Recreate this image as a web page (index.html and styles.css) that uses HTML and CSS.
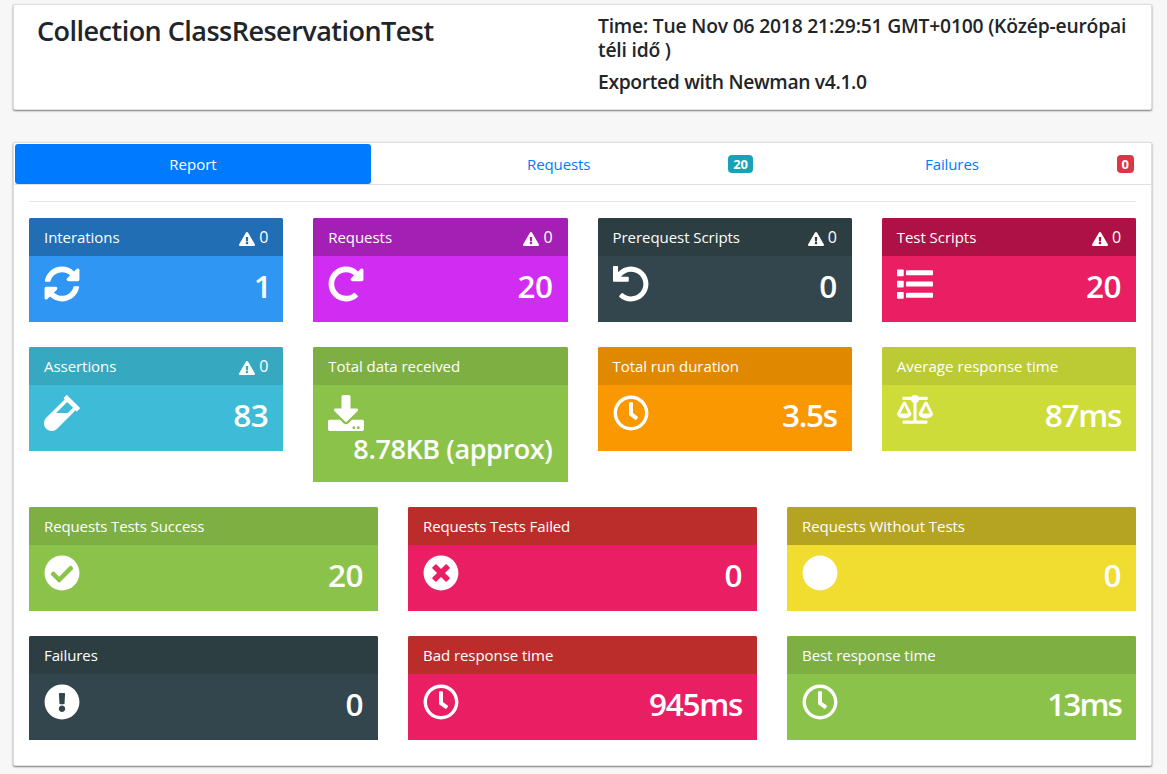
FILE: index.html
```
<!DOCTYPE html>
<html lang="en">
<head>
<meta charset="utf-8">
<title>Newman Report</title>
<link rel="stylesheet" href="styles.css">
</head>
<body>
<svg class="sprite" aria-hidden="true">
  <symbol id="i-warn" viewBox="0 0 576 512"><path d="M569.517 440.013C587.975 472.007 564.806 512 527.94 512H48.054c-36.937 0-59.999-40.055-41.577-71.987L246.423 23.985c18.467-32.009 64.72-31.951 83.154 0l239.94 416.028zM288 354c-25.405 0-46 20.595-46 46s20.595 46 46 46 46-20.595 46-46-20.595-46-46-46zm-43.673-165.346l7.418 136c.347 6.364 5.609 11.346 11.982 11.346h48.546c6.373 0 11.635-4.982 11.982-11.346l7.418-136c.375-6.874-5.098-12.654-11.982-12.654h-63.383c-6.884 0-12.356 5.78-11.981 12.654z"/></symbol>
  <symbol id="i-sync" viewBox="0 0 512 512"><path d="M370.72 133.28C339.458 104.008 298.888 87.962 255.848 88c-77.458.068-144.328 53.178-162.791 126.85-1.344 5.363-6.122 9.15-11.651 9.15H24.103c-7.498 0-13.194-6.807-11.807-14.176C33.933 94.924 134.813 8 256 8c66.448 0 126.791 26.136 171.315 68.685L463.03 40.97C478.149 25.851 504 36.559 504 57.941V192c0 13.255-10.745 24-24 24H345.941c-21.382 0-32.09-25.851-16.971-40.971l41.75-41.749zM32 296h134.059c21.382 0 32.09 25.851 16.971 40.971l-41.75 41.75c31.262 29.273 71.835 45.319 114.876 45.28 77.418-.07 144.315-53.144 162.787-126.849 1.344-5.363 6.122-9.15 11.651-9.15h57.304c7.498 0 13.194 6.807 11.807 14.176C478.067 417.076 377.187 504 256 504c-66.448 0-126.791-26.136-171.315-68.685L48.97 471.03C33.851 486.149 8 475.441 8 454.059V320c0-13.255 10.745-24 24-24z"/></symbol>
  <symbol id="i-redo" viewBox="0 0 512 512"><path d="M256.455 8c66.269.119 126.437 26.233 170.859 68.685l35.715-35.715C478.149 25.851 504 36.559 504 57.941V192c0 13.255-10.745 24-24 24H345.941c-21.382 0-32.09-25.851-16.971-40.971l41.75-41.75c-30.864-28.899-70.801-44.907-113.23-45.273-92.398-.798-170.283 73.977-169.484 169.442C88.764 348.009 162.184 424 256 424c41.127 0 79.997-14.678 110.629-41.556 4.743-4.161 11.906-3.908 16.368.553l39.662 39.662c4.872 4.872 4.631 12.815-.482 17.433C378.202 479.813 319.926 504 256 504 119.034 504 8.001 392.967 8 256.002 7.999 119.193 119.646 7.755 256.455 8z"/></symbol>
  <symbol id="i-undo" viewBox="0 0 512 512"><path d="M212.333 224.333H12c-6.627 0-12-5.373-12-12V12C0 5.373 5.373 0 12 0h48c6.627 0 12 5.373 12 12v78.112C117.773 39.279 184.26 7.47 258.175 8.007c136.906.994 246.448 111.623 246.157 248.532C504.041 393.258 393.12 504 256.333 504c-64.089 0-122.496-24.313-166.51-64.215-5.099-4.622-5.334-12.554-.467-17.42l33.967-33.967c4.474-4.474 11.662-4.717 16.401-.525C170.76 415.336 211.58 432 256.333 432c97.268 0 176-78.716 176-176 0-97.267-78.716-176-176-176-58.496 0-110.28 28.476-142.274 72.333h98.274c6.627 0 12 5.373 12 12v48c0 6.627-5.373 12-12 12z"/></symbol>
  <symbol id="i-list" viewBox="0 0 512 512"><rect x="0" y="48" width="96" height="96" rx="12"/><rect x="0" y="208" width="96" height="96" rx="12"/><rect x="0" y="368" width="96" height="96" rx="12"/><rect x="128" y="60" width="384" height="72" rx="12"/><rect x="128" y="220" width="384" height="72" rx="12"/><rect x="128" y="380" width="384" height="72" rx="12"/></symbol>
  <symbol id="i-vial" viewBox="0 16 480 480"><path d="M477.7 186.1L309.5 18.3c-3.1-3.1-8.2-3.1-11.3 0l-34 33.9c-3.1 3.1-3.1 8.2 0 11.3l11.2 11.1L33 316.5c-38.8 38.7-45.1 102-9.4 143.5 20.6 24 49.5 36 78.4 35.9 26.4 0 52.8-10 72.9-30.1l246.3-245.7 11.2 11.1c3.1 3.1 8.2 3.1 11.3 0l34-33.9c3.1-3 3.1-8.1 0-11.2zM318 256H161l148-147.7 78.5 78.3L318 256z"/></symbol>
  <symbol id="i-download" viewBox="0 0 512 512"><path d="M216 0h80c13.3 0 24 10.7 24 24v168h87.7c17.8 0 26.7 21.5 14.1 34.1L269.7 378.3c-7.5 7.5-19.8 7.5-27.3 0L90.1 226.1c-12.6-12.6-3.7-34.1 14.1-34.1H192V24c0-13.3 10.7-24 24-24zm296 376v112c0 13.3-10.7 24-24 24H24c-13.3 0-24-10.7-24-24V376c0-13.3 10.7-24 24-24h146.7l49 49c20.1 20.1 52.5 20.1 72.6 0l49-49H488c13.3 0 24 10.7 24 24zm-124 88c0-11-9-20-20-20s-20 9-20 20 9 20 20 20 20-9 20-20zm64 0c0-11-9-20-20-20s-20 9-20 20 9 20 20 20 20-9 20-20z"/></symbol>
  <symbol id="i-clock" viewBox="0 0 512 512"><path d="M256 8C119 8 8 119 8 256s111 248 248 248 248-111 248-248S393 8 256 8zm0 448c-110.5 0-200-89.5-200-200S145.5 56 256 56s200 89.5 200 200-89.5 200-200 200zm61.8-104.4l-84.9-61.7c-3.1-2.3-4.9-5.9-4.9-9.7V116c0-6.6 5.4-12 12-12h32c6.6 0 12 5.4 12 12v141.7l66.8 48.6c5.4 3.9 6.5 11.4 2.6 16.8L334.6 349c-3.9 5.3-11.4 6.5-16.8 2.6z"/></symbol>
  <symbol id="i-scale" viewBox="0 0 512 512"><g><rect x="76" y="24" width="360" height="46" rx="10"/><circle cx="256" cy="58" r="58"/><rect x="234" y="80" width="44" height="310"/><rect x="80" y="362" width="352" height="48" rx="12"/><path fill-rule="evenodd" d="M82 106c14-18 34-18 46 0l70 142c6 12 8 20 6 28-8 32-48 54-99 54S8 308 1 276c-2-8 0-16 6-28zM105 150L50 264H160z"/><path fill-rule="evenodd" d="M389 106c14-18 34-18 46 0l70 142c6 12 8 20 6 28-8 32-48 54-99 54s-97-22-104-54c-2-8 0-16 6-28zM412 150L357 264H467z"/></g></symbol>
  <symbol id="i-check" viewBox="0 0 512 512"><path d="M504 256c0 136.967-111.033 248-248 248S8 392.967 8 256 119.033 8 256 8s248 111.033 248 248zM227.314 387.314l184-184c6.248-6.248 6.248-16.379 0-22.627l-22.627-22.627c-6.248-6.249-16.379-6.249-22.628 0L216 308.118l-70.059-70.059c-6.248-6.248-16.379-6.248-22.628 0l-22.627 22.627c-6.248 6.248-6.248 16.379 0 22.627l104 104c6.249 6.249 16.379 6.249 22.628.001z"/></symbol>
  <symbol id="i-times" viewBox="0 0 512 512"><path d="M256 8C119 8 8 119 8 256s111 248 248 248 248-111 248-248S393 8 256 8zm121.6 313.1c4.7 4.7 4.7 12.3 0 17L338 377.6c-4.7 4.7-12.3 4.7-17 0L256 312l-65.1 65.6c-4.7 4.7-12.3 4.7-17 0L134.4 338c-4.7-4.7-4.7-12.3 0-17l65.6-65-65.6-65.1c-4.7-4.7-4.7-12.3 0-17l39.6-39.6c4.7-4.7 12.3-4.7 17 0l65 65.7 65.1-65.6c4.7-4.7 12.3-4.7 17 0l39.6 39.6c4.7 4.7 4.7 12.3 0 17L312 256l65.6 65.1z"/></symbol>
  <symbol id="i-circle" viewBox="0 0 512 512"><circle cx="256" cy="256" r="248"/></symbol>
  <symbol id="i-excl" viewBox="0 0 512 512"><path d="M504 256c0 136.997-111.043 248-248 248S8 392.997 8 256C8 119.083 119.043 8 256 8s248 111.083 248 248zm-248 50c-25.405 0-46 20.595-46 46s20.595 46 46 46 46-20.595 46-46-20.595-46-46-46zm-43.673-165.346l7.418 136c.347 6.364 5.609 11.346 11.982 11.346h48.546c6.373 0 11.635-4.982 11.982-11.346l7.418-136c.375-6.874-5.098-12.654-11.982-12.654h-63.383c-6.884 0-12.356 5.78-11.981 12.654z"/></symbol>
</svg>

<header class="panel banner">
  <h1 class="banner-title">Collection ClassReservationTest</h1>
  <div class="banner-meta">
    <p class="meta-time">Time: Tue Nov 06 2018 21:29:51 GMT+0100 (Közép-európai<br>téli idő )</p>
    <p class="meta-export">Exported with Newman v4.1.0</p>
  </div>
</header>

<main class="panel">
  <nav class="tabs">
    <a class="tab tab-active">Report</a>
    <a class="tab tab-requests"><span class="tab-label">Requests</span><span class="badge badge-info">20</span></a>
    <a class="tab tab-failures"><span class="tab-label">Failures</span><span class="badge badge-danger">0</span></a>
  </nav>
  <div class="content">
    <section class="grid four">
      <article class="card blue"><div class="head"><span>Interations</span><span class="alert"><svg><use href="#i-warn"/></svg>0</span></div><div class="body"><svg class="icon"><use href="#i-sync"/></svg><b class="value one">1</b></div></article>
      <article class="card purple"><div class="head"><span>Requests</span><span class="alert"><svg><use href="#i-warn"/></svg>0</span></div><div class="body"><svg class="icon"><use href="#i-redo"/></svg><b class="value">20</b></div></article>
      <article class="card dark"><div class="head"><span>Prerequest Scripts</span><span class="alert"><svg><use href="#i-warn"/></svg>0</span></div><div class="body"><svg class="icon"><use href="#i-undo"/></svg><b class="value">0</b></div></article>
      <article class="card pink"><div class="head"><span>Test Scripts</span><span class="alert"><svg><use href="#i-warn"/></svg>0</span></div><div class="body"><svg class="icon"><use href="#i-list"/></svg><b class="value">20</b></div></article>
      <article class="card cyan"><div class="head"><span>Assertions</span><span class="alert"><svg><use href="#i-warn"/></svg>0</span></div><div class="body"><svg class="icon"><use href="#i-vial"/></svg><b class="value">83</b></div></article>
      <article class="card green"><div class="head"><span>Total data received</span></div><div class="body stacked"><svg class="icon"><use href="#i-download"/></svg><b class="value small">8.78KB (approx)</b></div></article>
      <article class="card orange"><div class="head"><span>Total run duration</span></div><div class="body"><svg class="icon"><use href="#i-clock"/></svg><b class="value tight">3.5s</b></div></article>
      <article class="card lime"><div class="head"><span class="loose">Average response time</span></div><div class="body"><svg class="icon"><use href="#i-scale"/></svg><b class="value tight">87ms</b></div></article>
    </section>
    <section class="grid three">
      <article class="card green"><div class="head"><span class="snug">Requests Tests Success</span></div><div class="body"><svg class="icon"><use href="#i-check"/></svg><b class="value">20</b></div></article>
      <article class="card red"><div class="head"><span class="snug">Requests Tests Failed</span></div><div class="body"><svg class="icon"><use href="#i-times"/></svg><b class="value">0</b></div></article>
      <article class="card yellow"><div class="head"><span>Requests Without Tests</span></div><div class="body"><svg class="icon"><use href="#i-circle"/></svg><b class="value">0</b></div></article>
      <article class="card dark"><div class="head"><span class="snug">Failures</span></div><div class="body"><svg class="icon"><use href="#i-excl"/></svg><b class="value">0</b></div></article>
      <article class="card red"><div class="head"><span>Bad response time</span></div><div class="body"><svg class="icon"><use href="#i-clock"/></svg><b class="value tight">945ms</b></div></article>
      <article class="card green"><div class="head"><span>Best response time</span></div><div class="body"><svg class="icon"><use href="#i-clock"/></svg><b class="value tighter">13ms</b></div></article>
    </section>
  </div>
</main>
</body>
</html>
```

FILE: styles.css
```
* { box-sizing: border-box; }
body {
  margin: 0;
  padding: 4px 15px 0 13px;
  height: 774px;
  overflow: hidden;
  background: #f7f7f7;
  color: #212529;
  font: 15px/24px "Open Sans", "Noto Sans", sans-serif;
}
.sprite { display: none; }
.panel {
  background: #fff;
  border: 1px solid #dfdfdf;
  border-radius: 2px;
  box-shadow: 0 1px 2px rgba(0, 0, 0, .5);
}

/* banner */
.banner {
  display: grid;
  grid-template-columns: 561px 1fr;
  height: 106px;
  padding: 9px 0 0 23px;
  margin-bottom: 32px;
}
.banner-title { margin: 0; font-size: 27px; line-height: 34px; font-weight: 600; letter-spacing: -.52px; }
.banner-meta { font-size: 19.3px; font-weight: 600; white-space: nowrap; }
.banner-meta p { margin: 0 0 8px; }
.meta-time { letter-spacing: -.2px; }
.meta-export { letter-spacing: -.34px; }

/* tabs */
.tabs {
  display: flex;
  height: 42px;
  padding: 1px 1px 0;
  border-bottom: 1px solid #dee2e6;
}
.tab { display: flex; align-items: center; height: 40px; color: #007bff; }
.tab-active {
  width: 356px;
  justify-content: center;
  background: #007bff;
  border-radius: 3px;
  color: #fff;
}
.tab-requests { width: 382px; padding-left: 156px; justify-content: space-between; }
.tab-failures { flex: 1; padding: 0 16px 0 172px; justify-content: space-between; }
.tab-label { letter-spacing: -.1px; }
.badge {
  height: 18px;
  padding: 0 5px;
  border-radius: 4px;
  color: #fff;
  font-size: 13px;
  font-weight: 700;
  line-height: 18px;
}
.badge-info { background: #17a2b8; }
.badge-danger { background: #dc3545; }

/* cards */
.content { margin: 16px 15px 0; padding: 16px 0 25px; border-top: 1px solid #e4e4e4; }
.grid { display: grid; gap: 25px 30px; align-items: start; }
.four { grid-template-columns: repeat(4, 1fr); margin-bottom: 25px; }
.three { grid-template-columns: repeat(3, 1fr); }
.card { background: var(--main); color: #fff; border-radius: 2px 2px 0 0; }
.head {
  display: flex;
  justify-content: space-between;
  height: 38px;
  padding: 7px 15px;
  background: var(--top);
  border-radius: 2px 2px 0 0;
  letter-spacing: -.05px;
}
.snug { letter-spacing: -.11px; }
.loose { letter-spacing: .05px; }
.alert { display: flex; gap: 4px; font-size: 16px; }
.alert svg { width: 16px; height: 14.2px; margin-top: 7px; fill: #fff; }
.body { display: flex; justify-content: space-between; height: 66px; padding: 10px 15px 0; }
.icon { width: 36px; height: 36px; fill: #fff; }
.value { margin-top: 2px; font-size: 31.5px; line-height: 36px; font-weight: 650; letter-spacing: -.5px; }
.one { margin-right: -3px; }
.tight { letter-spacing: -1.3px; }
.tighter { letter-spacing: -1.9px; }
.stacked { flex-direction: column; justify-content: flex-start; height: 97px; }
.stacked .value { align-self: flex-end; margin-top: 0; }
.small { font-size: 27px; letter-spacing: -.4px; }

.blue { --top: #216eb5; --main: #2f96f4; }
.purple { --top: #a41fb3; --main: #d12cf2; }
.dark { --top: #2d3e42; --main: #33464d; }
.pink { --top: #ad1145; --main: #ea1e63; }
.cyan { --top: #36a9c1; --main: #3dbbd7; }
.green { --top: #7eaf43; --main: #8bc34a; }
.orange { --top: #e08900; --main: #f99800; }
.lime { --top: #bccb33; --main: #cddc39; }
.red { --top: #bb2d2a; --main: #ea1e63; }
.yellow { --top: #b5a422; --main: #f1dc30; }
```
